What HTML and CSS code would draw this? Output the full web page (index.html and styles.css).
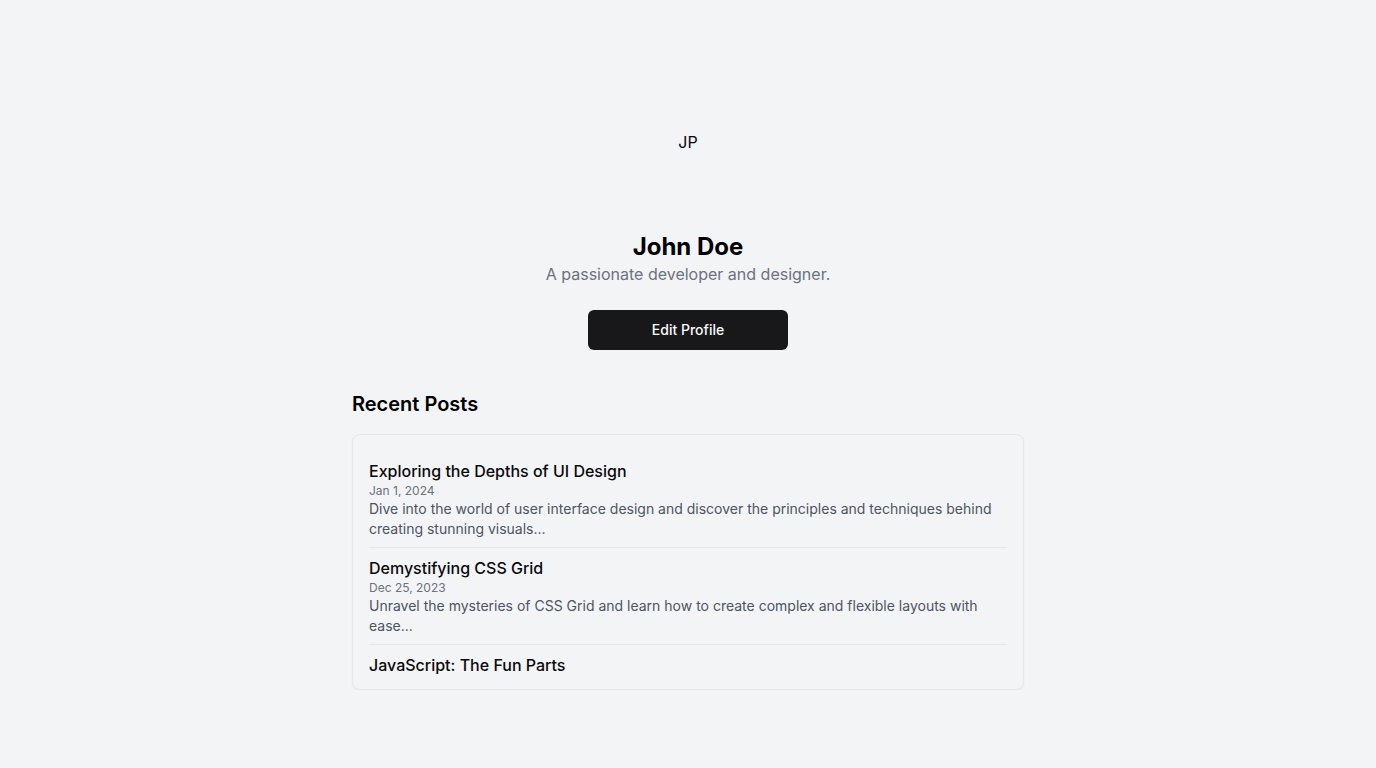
FILE: index.html
```html
<!DOCTYPE html>
<html lang="en">
<head>
<meta charset="utf-8">
<title>John Doe</title>
<link rel="stylesheet" href="styles.css">
</head>
<body>
<main class="page">
  <section class="profile">
    <div class="avatar"><span class="avatar-fallback">JP</span></div>
    <h1 class="name">John Doe</h1>
    <p class="bio">A passionate developer and designer.</p>
    <button class="edit-btn">Edit Profile</button>
  </section>
  <section class="posts">
    <h2 class="posts-title">Recent Posts</h2>
    <div class="card">
      <ul class="post-list">
        <li class="post">
          <h3 class="post-title">Exploring the Depths of UI Design</h3>
          <p class="post-date">Jan 1, 2024</p>
          <p class="post-desc">Dive into the world of user interface design and discover the principles and techniques behind creating stunning visuals...</p>
        </li>
        <li class="post">
          <h3 class="post-title">Demystifying CSS Grid</h3>
          <p class="post-date">Dec 25, 2023</p>
          <p class="post-desc">Unravel the mysteries of CSS Grid and learn how to create complex and flexible layouts with ease...</p>
        </li>
        <li class="post">
          <h3 class="post-title">JavaScript: The Fun Parts</h3>
        </li>
      </ul>
    </div>
  </section>
</main>
</body>
</html>
```

FILE: styles.css
```css
* { box-sizing: border-box; }
html, body { margin: 0; padding: 0; }
body {
  background: #f3f4f6;
  font-family: Inter, "Noto Sans", sans-serif;
  color: #09090b;
}
.page {
  width: 672px;
  margin: 0 auto;
  padding-top: 78px;
}
.profile {
  display: flex;
  flex-direction: column;
  align-items: center;
}
.avatar {
  width: 128px;
  height: 128px;
  border-radius: 50%;
  display: flex;
  align-items: center;
  justify-content: center;
  overflow: hidden;
}
.avatar-fallback {
  font-size: 16px;
  line-height: 24px;
  color: #09090b;
}
.name {
  margin: 24px 0 0;
  font-size: 24px;
  line-height: 34px;
  font-weight: 700;
  color: #000;
}
.bio {
  margin: -2px 0 0;
  font-size: 16px;
  line-height: 24px;
  color: #6b7280;
}
.edit-btn {
  margin-top: 24px;
  width: 200px;
  height: 40px;
  padding: 0 0 2px;
  border: none;
  border-radius: 6px;
  background: #18181b;
  color: #fafafa;
  font-family: inherit;
  font-size: 14px;
  font-weight: 500;
}
.posts { margin-top: 40px; }
.posts-title {
  margin: 0 0 16px;
  font-size: 20px;
  line-height: 28px;
  font-weight: 600;
  color: #000;
}
.card {
  border: 1px solid #e5e7eb;
  border-radius: 8px;
  box-shadow: 0 1px 2px rgba(0,0,0,0.05);
  padding: 16px 16px 4px;
}
.post-list {
  list-style: none;
  margin: 0;
  padding: 0;
}
.post {
  padding: 8px 0;
  border-bottom: 1px solid #e5e7eb;
}
.post:last-child { border-bottom: none; }
.post-title {
  margin: 0;
  font-size: 16px;
  line-height: 24px;
  font-weight: 500;
  color: #09090b;
}
.post-date {
  margin: 0;
  font-size: 12px;
  line-height: 16px;
  color: #6b7280;
}
.post-desc {
  margin: 0;
  font-size: 14px;
  line-height: 20px;
  color: #4b5563;
}
```
